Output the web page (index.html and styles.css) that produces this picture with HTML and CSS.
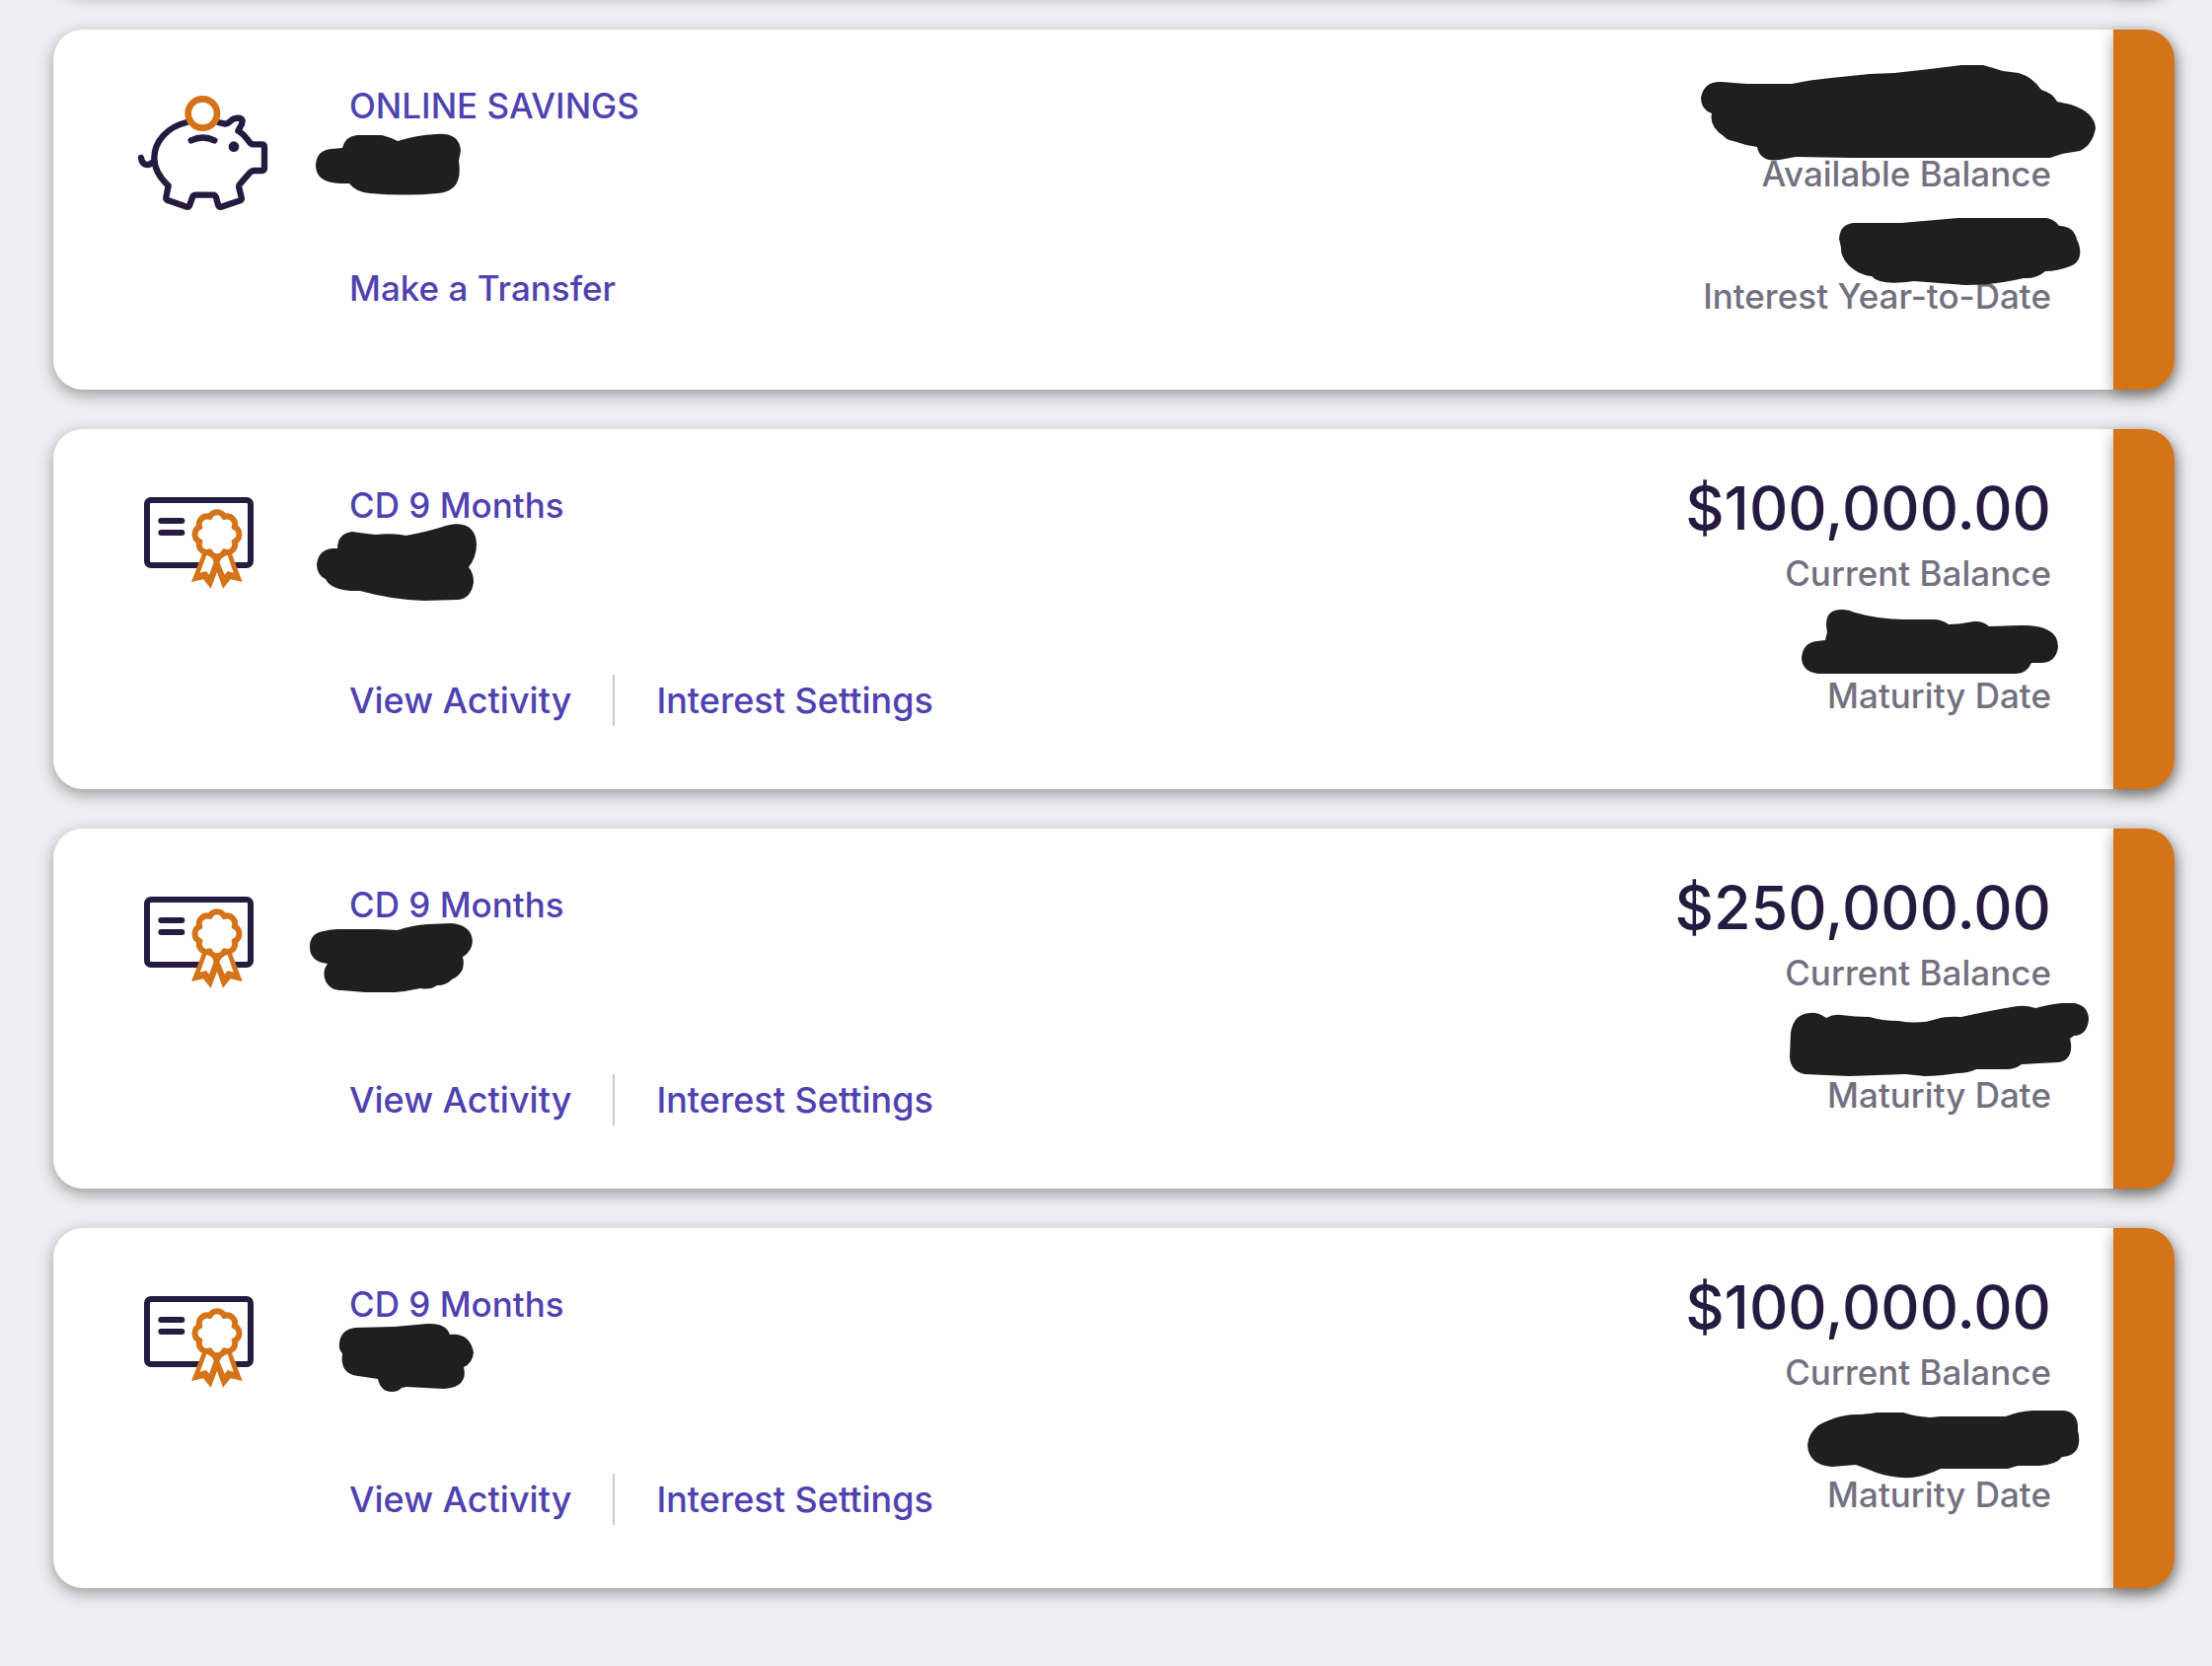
FILE: index.html
```html
<!DOCTYPE html>
<html lang="en">
<head>
<meta charset="utf-8">
<meta name="viewport" content="width=device-width, initial-scale=1">
<title>Accounts</title>
<link rel="stylesheet" href="styles.css">
</head>
<body>
<svg class="sprite" aria-hidden="true">
  <symbol id="icon-savings" viewBox="0 0 510 450">
    <g fill="none" stroke="#241c40" stroke-width="19" stroke-linecap="round" stroke-linejoin="round">
      <path d="M208 132C150 145 109 190 109 240C109 275 125 300 152 325L145 360Q144 368 152 370L208 389Q214 390 217 383L226 358Q228 353 236 353L288 353Q294 353 297 360L303 383Q306 391 313 389L370 370Q376 367 374 360L366 328Q366 322 372 317L401 284Q405 279 412 279L436 279Q444 279 444 270L444 207Q444 199 436 199L410 199Q404 199 401 195L382 172Q370 160 364 158C368 148 377 140 377 128Q376 119 362 119Q348 120 340 129Q332 137 325 137L303 132"/>
      <path d="M69 240Q72 260 88 261Q97 261 106 252"/>
      <path d="M221 187Q257 170 292 187"/>
    </g>
    <circle cx="351" cy="206" r="16" fill="#241c40"/>
    <circle cx="256" cy="105" r="44" fill="#fff" stroke="#d47317" stroke-width="20"/>
  </symbol>
  <symbol id="icon-cd" viewBox="0 0 510 450">
    <g transform="translate(30 -15)">
      <g fill="none" stroke="#241c40" stroke-width="18" stroke-linecap="round">
        <rect x="57" y="81" width="315" height="198" rx="12"/>
        <path d="M100 144H163M100 180H163"/>
      </g>
      <path fill="#d47317" d="M228 236L192 330L228 322L251 350L270 300L288 350L311 322L347 330L312 236Z"/>
      <path fill="#fff" d="M238 248L218 302L237 297L246 308L260 270L254 255ZM302 248L320 302L302 297L293 308L277 270L286 255Z"/>
      <path fill="#fff" stroke="#d47317" stroke-width="18" stroke-linejoin="round" d="M323 207A24 24 0 0 1 292 238A24 24 0 0 1 248 238A24 24 0 0 1 217 207A24 24 0 0 1 217 163A24 24 0 0 1 248 132A24 24 0 0 1 292 132A24 24 0 0 1 323 163A24 24 0 0 1 323 207Z"/>
    </g>
  </symbol>
</svg>

<main class="accounts">
  <div class="card card--above"><div class="card__accent"></div></div>

  <article class="card">
    <svg class="card__icon" aria-hidden="true"><use href="#icon-savings"/></svg>
    <div class="card__main">
      <h2 class="card__title"><a href="#savings">ONLINE SAVINGS</a></h2>
      <nav class="card__links card__links--single"><a href="#transfer">Make a Transfer</a></nav>
    </div>
    <dl class="card__figures">
      <dd class="amount"></dd><dt>Available Balance</dt>
      <dd class="detail"></dd><dt>Interest Year-to-Date</dt>
    </dl>
    <div class="card__accent"></div>
    <svg class="redaction redaction--number" viewBox="304 30 250 220" aria-hidden="true"><path d="M320 167Q321 152 336 151L347 150Q350 138 362 137L387 137Q395 139 403 143Q422 137 442 136Q466 134 467 153L465 163Q470 194 444 196Q410 199 375 196Q361 195 354 186C332 187 320 182 320 167Z"/></svg>
    <svg class="redaction redaction--figures" viewBox="1662 30 480 365" aria-hidden="true"><path d="M1724 99Q1727 82 1745 83L1770 85L1816 85Q1834 81 1856 79L1895 75L1920 74L1956 70L1988 66L2010 66Q2018 68 2030 72L2046 74Q2060 78 2069 91Q2080 94 2085 103L2099 106Q2123 114 2124 130Q2121 147 2108 153L2090 156L2078 160L1877 160L1820 159L1804 162Q1784 165 1781 149L1770 147L1757 143Q1750 142 1747 138Q1732 128 1735 115Q1724 111 1724 99Z"/><path d="M1864 242Q1865 227 1879 226L1927 226L1985 221L2074 221Q2082 222 2087 229Q2102 229 2105 243C2111 254 2109 267 2098 270Q2085 275 2073 275Q2064 283 2051 282Q2022 289 1992 289L1940 285Q1905 290 1897 280C1882 279 1865 265 1866 251Z"/></svg>
  </article>

  <article class="card">
    <svg class="card__icon" aria-hidden="true"><use href="#icon-cd"/></svg>
    <div class="card__main">
      <h2 class="card__title"><a href="#cd-1">CD 9 Months</a></h2>
      <nav class="card__links"><a href="#activity-1">View Activity</a><a href="#interest-1">Interest Settings</a></nav>
    </div>
    <dl class="card__figures">
      <dd class="amount">$100,000.00</dd><dt>Current Balance</dt>
      <dd class="detail"></dd><dt>Maturity Date</dt>
    </dl>
    <div class="card__accent"></div>
    <svg class="redaction redaction--number" viewBox="304 435 250 220" aria-hidden="true"><path d="M321 572Q323 557 337 556L342 556Q342 541 357 539Q370 541 380 542Q400 540 411 543Q430 540 452 533C472 527 483 536 483 552Q483 565 475 575Q480 581 480 590Q478 606 465 608L430 609Q397 608 365 599Q336 600 330 587Q321 583 321 572Z"/></svg>
    <svg class="redaction redaction--figures" viewBox="1662 435 480 365" aria-hidden="true"><path d="M1826 666Q1828 651 1842 650L1850 649L1852 641Q1847 617 1868 618Q1874 618 1880 621Q1905 628 1930 628L1960 628Q1968 628 1975 633Q1986 633 1995 631Q2008 628 2016 635L2049 634Q2068 634 2076 639Q2086 644 2086 656Q2084 671 2070 672L2059 672Q2054 683 2044 683L1843 683Q1826 681 1826 666Z"/></svg>
  </article>

  <article class="card">
    <svg class="card__icon" aria-hidden="true"><use href="#icon-cd"/></svg>
    <div class="card__main">
      <h2 class="card__title"><a href="#cd-2">CD 9 Months</a></h2>
      <nav class="card__links"><a href="#activity-2">View Activity</a><a href="#interest-2">Interest Settings</a></nav>
    </div>
    <dl class="card__figures">
      <dd class="amount">$250,000.00</dd><dt>Current Balance</dt>
      <dd class="detail"></dd><dt>Maturity Date</dt>
    </dl>
    <div class="card__accent"></div>
    <svg class="redaction redaction--number" viewBox="304 840 250 220" aria-hidden="true"><path d="M314 960Q314 946 328 944Q336 942 343 942L383 942L403 943Q418 938 433 937L457 936C482 937 485 961 469 970Q473 986 458 993Q452 999 443 999Q436 1004 426 1002Q412 1005 400 1006L370 1006L347 1004C330 1005 324 987 332 977Q314 975 314 960Z"/></svg>
    <svg class="redaction redaction--figures" viewBox="1662 840 480 365" aria-hidden="true"><path d="M1814 1072L1815 1047Q1818 1028 1834 1027Q1843 1026 1851 1032Q1858 1028 1866 1029Q1880 1031 1895 1031Q1908 1035 1924 1035Q1946 1039 1963 1033Q1972 1030 1988 1031Q2020 1024 2045 1020Q2054 1019 2063 1022Q2078 1018 2089 1017L2103 1017Q2117 1020 2117 1034Q2115 1050 2102 1050L2098 1053C2102 1067 2096 1077 2085 1077L2049 1079Q2043 1084 2033 1084L2003 1084Q1995 1088 1984 1088Q1965 1091 1951 1091L1931 1089L1874 1091L1829 1089Q1815 1086 1814 1072Z"/></svg>
  </article>

  <article class="card">
    <svg class="card__icon" aria-hidden="true"><use href="#icon-cd"/></svg>
    <div class="card__main">
      <h2 class="card__title"><a href="#cd-3">CD 9 Months</a></h2>
      <nav class="card__links"><a href="#activity-3">View Activity</a><a href="#interest-3">Interest Settings</a></nav>
    </div>
    <dl class="card__figures">
      <dd class="amount">$100,000.00</dd><dt>Current Balance</dt>
      <dd class="detail"></dd><dt>Maturity Date</dt>
    </dl>
    <div class="card__accent"></div>
    <svg class="redaction redaction--number" viewBox="304 1245 250 220" aria-hidden="true"><path d="M344 1362Q345 1348 360 1346L400 1345L433 1342Q452 1341 456 1353Q476 1351 480 1371Q479 1382 470 1386Q475 1406 450 1408L412 1406L407 1407Q404 1411 397 1411Q386 1411 383 1398L363 1395Q344 1393 347 1372Q343 1368 344 1362Z"/></svg>
    <svg class="redaction redaction--figures" viewBox="1662 1245 480 365" aria-hidden="true"><path d="M1832 1465Q1833 1453 1843 1445C1854 1439 1867 1434 1881 1434Q1890 1434 1902 1432L1929 1432Q1940 1436 1956 1437L1967 1436L2033 1436Q2045 1431 2060 1430L2092 1430Q2107 1432 2106 1450Q2112 1475 2090 1477Q2084 1485 2067 1486L2045 1486L2035 1489L1967 1489Q1953 1496 1938 1498Q1919 1499 1902 1493Q1892 1489 1881 1485L1857 1487Q1833 1485 1832 1465Z"/></svg>
  </article>
</main>
</body>
</html>
```
FILE: styles.css
```css
* {
  box-sizing: border-box;
}

body {
  margin: 0;
  background: #eeeef0;
  font-family: Inter, "Liberation Sans", sans-serif;
  font-size: 35px;
  font-weight: 500;
  line-height: 44px;
  color: #737080;
}

.sprite {
  position: absolute;
  width: 0;
  height: 0;
}

.accounts {
  display: flex;
  flex-direction: column;
  gap: 40px;
  padding: 0 38px 79px 54px;
}

.card {
  position: relative;
  display: flex;
  align-items: flex-start;
  min-height: 365px;
  border-radius: 30px;
  background: #fff;
  box-shadow: 0 5px 15px rgba(0, 0, 0, 0.35);
}

/* Previous account, scrolled out of view */
.card--above {
  margin-top: -375px;
}

.card__icon {
  flex: none;
  width: 170px;
  height: 150px;
  margin: 50px 64px 0 66px;
}

.card__main {
  flex: 1;
  padding-top: 55px;
}

.card__title {
  margin: 0;
  font-size: inherit;
  font-weight: inherit;
}

.card a {
  color: #4f42b0;
  text-decoration: none;
}

.card__links {
  display: flex;
  margin-top: 150px;
  font-size: 36px;
  line-height: 52px;
}

.card__links--single {
  margin-top: 137px;
  font-size: 35px;
}

.card__links a + a {
  margin-left: 42px;
  padding-left: 42px;
  border-left: 2px solid #c9c8d2;
}

.card__figures {
  margin: 0;
  padding: 42px 63px 0 0;
  text-align: right;
}

.amount,
.detail {
  margin: 0;
}

.amount {
  height: 82px;
  font-size: 61px;
  line-height: 76px;
  color: #241c40;
}

.detail {
  height: 80px;
}

.card__accent {
  align-self: stretch;
  width: 62px;
  margin-left: auto;
  border-radius: 0 30px 30px 0;
  background: #d47317;
  box-shadow: 0 5px 15px rgba(0, 0, 0, 0.35);
}

.redaction {
  position: absolute;
  top: 0;
  fill: #1f1f1f;
}

.redaction--number {
  left: 250px;
  width: 250px;
  height: 220px;
  pointer-events: none;
}

.redaction--figures {
  right: 62px;
  width: 480px;
  height: 365px;
  pointer-events: none;
}
```
